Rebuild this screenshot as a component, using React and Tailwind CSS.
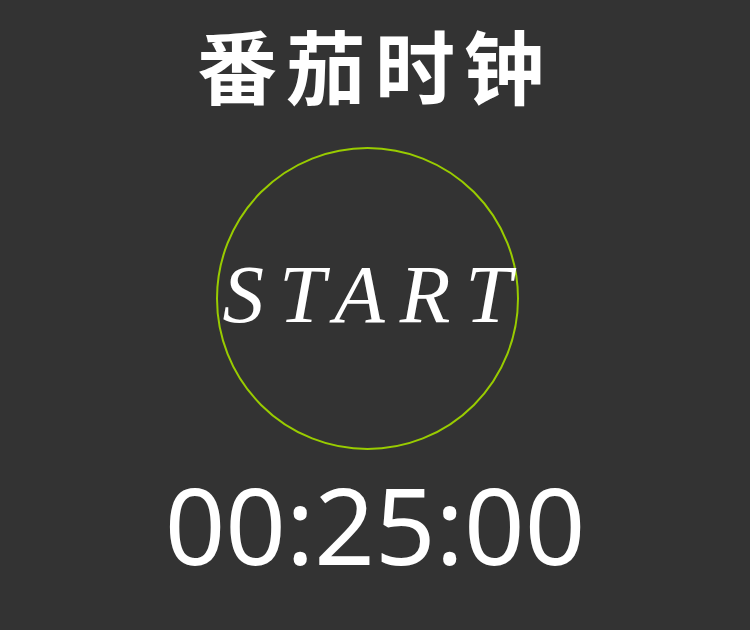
import React from 'react';

export default function App() {
    return (
        <div className="w-[750px] h-[630px] bg-[#333333] flex flex-col items-center overflow-hidden font-['Noto_Sans',sans-serif]">
            <h1 className="mt-[15px] text-white text-[80px] leading-[96px] tracking-[9px] font-bold font-['Noto_Sans_CJK_SC',sans-serif]">
                番茄时钟
            </h1>

            {/* Start button */}
            <button className="mt-[36px] mr-[16px] w-[303px] h-[303px] rounded-full border-2 border-[#99cc00] flex items-center justify-center">
                <span className="pb-[8px] pl-[15px] text-white italic text-[83px] leading-none tracking-[15px] font-['Liberation_Serif',serif]">
                    START
                </span>
            </button>

            <div className="mt-[12px] text-white text-[106px] leading-[125px]">
                00:25:00
            </div>
        </div>
    );
}
